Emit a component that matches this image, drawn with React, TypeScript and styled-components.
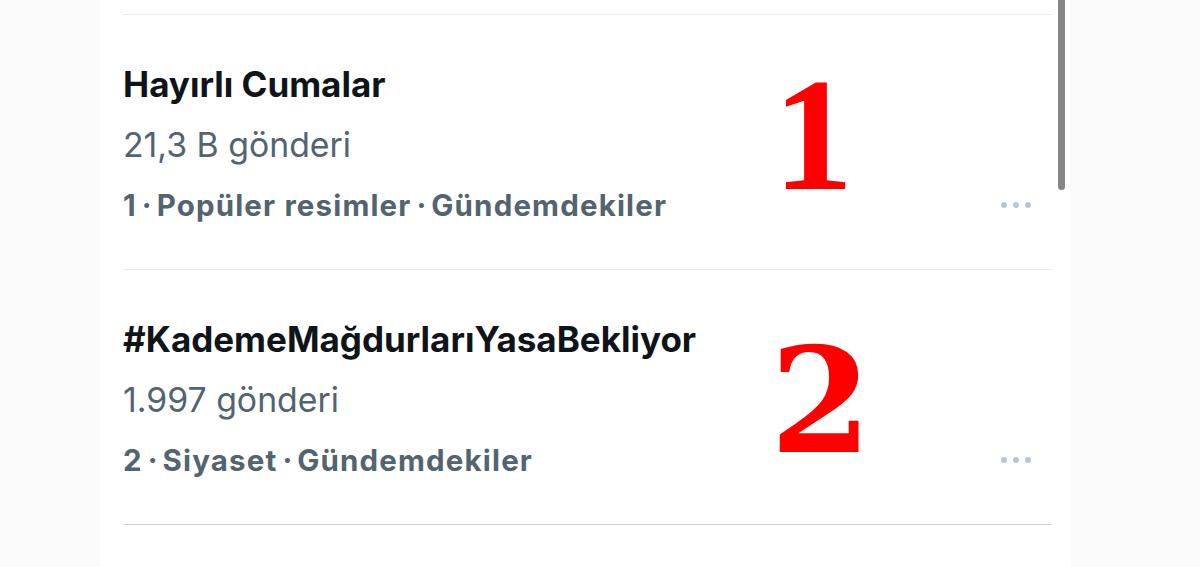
import styled, { createGlobalStyle } from "styled-components";

const GlobalStyle = createGlobalStyle`
  html, body {
    margin: 0;
    padding: 0;
    background: #fafafa;
  }
  body {
    font-family: Inter, "Noto Sans", "DejaVu Sans", sans-serif;
  }
`;

const Page = styled.div`
  width: 1200px;
  height: 567px;
  overflow: hidden;
  display: flex;
  padding-left: 100px;
  box-sizing: border-box;
`;

const Panel = styled.section`
  position: relative;
  width: 970px;
  background: #ffffff;
  padding: 14px 18px 0 23px;
  box-sizing: border-box;
`;

const ScrollThumb = styled.div`
  position: absolute;
  top: -6px;
  right: 5px;
  width: 7px;
  height: 196px;
  border-radius: 4px;
  background: #868686;
`;

const TrendRow = styled.article`
  position: relative;
  border-top: 1px solid #e8eaeb;
  padding: 49px 0 47px;
  &:last-of-type {
    border-bottom: 1px solid #d3d6d8;
  }
`;

const Title = styled.div`
  font-size: 35px;
  line-height: 40px;
  font-weight: 700;
  color: #0f1419;
`;

const PostCount = styled.div`
  margin-top: 21px;
  font-size: 33.8px;
  line-height: 40px;
  font-weight: 400;
  color: #536471;
`;

const MetaLine = styled.div`
  margin-top: 23px;
  display: flex;
  align-items: center;
  justify-content: space-between;
  height: 34px;
`;

const Meta = styled.span`
  font-size: 29.5px;
  line-height: 34px;
  font-weight: 700;
  letter-spacing: 1.15px;
  color: #536471;
`;

const Sep = styled.span`
  letter-spacing: 0;
  margin: 0 -2px;
`;

const MoreButton = styled.div`
  display: flex;
  gap: 6px;
  margin-right: 21px;
`;

const Dot = styled.span`
  width: 6px;
  height: 6px;
  border-radius: 50%;
  background: #bcc6cf;
`;

// big red rank numeral painted over the row
const Mark = styled.div<{ $top: number; $left: number; $size: number; $font: string }>`
  position: absolute;
  top: ${(p) => p.$top}px;
  left: ${(p) => p.$left}px;
  font-family: ${(p) => p.$font};
  font-weight: 700;
  font-size: ${(p) => p.$size}px;
  line-height: 1;
  color: #ff0000;
`;

type Trend = {
  title: string;
  posts: string;
  rank: number;
  category: string;
  mark: { top: number; left: number; size: number; font: string };
};

const trends: Trend[] = [
  {
    title: "Hayırlı Cumalar",
    posts: "21,3 B gönderi",
    rank: 1,
    category: "Popüler resimler",
    mark: { top: 40, left: 650, size: 161, font: `"Liberation Serif", serif` },
  },
  {
    title: "#KademeMağdurlarıYasaBekliyor",
    posts: "1.997 gönderi",
    rank: 2,
    category: "Siyaset",
    mark: { top: 58, left: 647, size: 146, font: `"DejaVu Serif", serif` },
  },
];

export default function App() {
  return (
    <>
      <GlobalStyle />
      <Page>
        <Panel>
          <ScrollThumb />
          {trends.map((t) => (
            <TrendRow key={t.rank}>
              <Title>{t.title}</Title>
              <PostCount>{t.posts}</PostCount>
              <MetaLine>
                <Meta>
                  {t.rank}
                  <Sep> · </Sep>
                  {t.category}
                  <Sep> · </Sep>
                  Gündemdekiler
                </Meta>
                <MoreButton>
                  <Dot />
                  <Dot />
                  <Dot />
                </MoreButton>
              </MetaLine>
              <Mark
                $top={t.mark.top}
                $left={t.mark.left}
                $size={t.mark.size}
                $font={t.mark.font}
              >
                {t.rank}
              </Mark>
            </TrendRow>
          ))}
        </Panel>
      </Page>
    </>
  );
}
